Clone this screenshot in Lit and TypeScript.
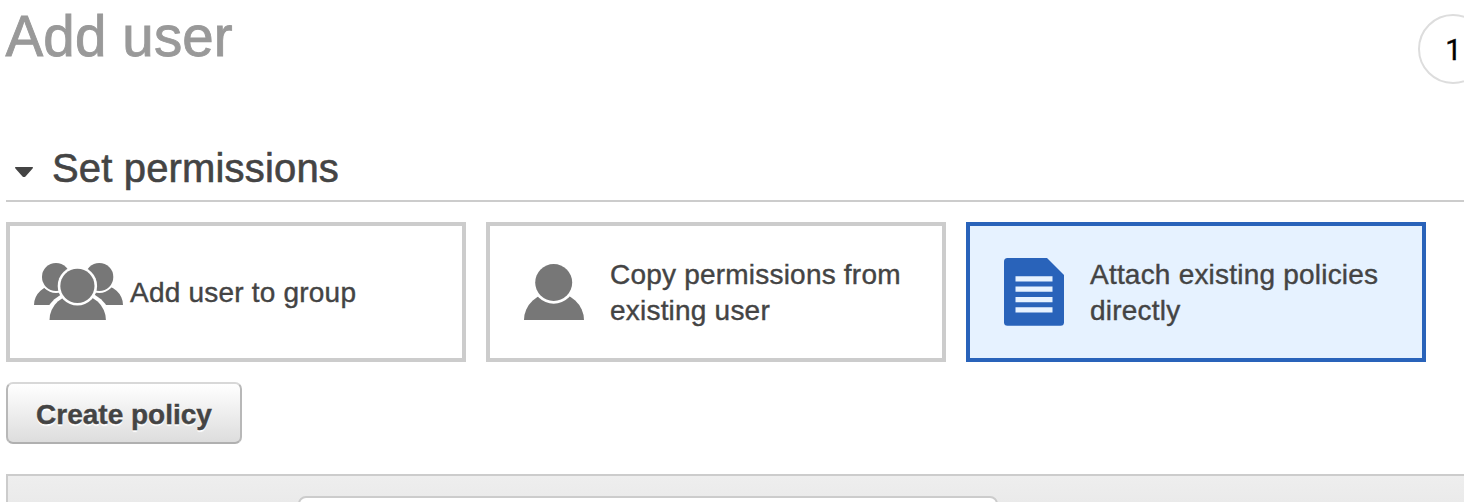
import { LitElement, html, css, svg } from "lit";
import { customElement } from "lit/decorators.js";
import { classMap } from "lit/directives/class-map.js";

const groupIcon = svg`
  <svg width="90" height="60" viewBox="34 262 90 60">
    <g fill="#777">
      <path d="M34 305a22 20 0 0 1 44 0zM79 305a22 20 0 0 1 44 0z"/>
      <circle cx="56" cy="277" r="16" fill="#fff"/>
      <circle cx="99.3" cy="277" r="16" fill="#fff"/>
      <circle cx="56" cy="277" r="14"/>
      <circle cx="99.3" cy="277" r="14"/>
      <path fill="#fff" d="M44.700 320a33 29.500 0 0 1 66 0z"/>
      <path d="M49.500 320a28.200 26 0 0 1 56.400 0z"/>
      <circle cx="77.400" cy="285.900" r="19.700" fill="#fff"/>
      <circle cx="77.400" cy="285.900" r="17.100"/>
    </g>
  </svg>`;

const userIcon = svg`
  <svg width="60" height="58" viewBox="0 0 60 58">
    <path fill="#777" d="M0 57a30 27.500 0 0 1 60 0z"/>
    <circle cx="29.700" cy="19.500" r="21.200" fill="#fff"/>
    <circle cx="29.700" cy="19.500" r="18.500" fill="#777"/>
  </svg>`;

const policyIcon = svg`
  <svg width="60" height="68" viewBox="0 0 60 68">
    <path fill="#2963ba" d="M3.500 0H43L60 17V64.300Q60 67.800 56.500 67.800H3.500Q0 67.800 0 64.300V3.500Q0 0 3.500 0z"/>
    <path fill="#e6f2ff" d="M11.500 18.200H48.500v5.300H11.500zM11.500 28.500H48.500v5.300H11.500zM11.500 39H48.500v5.300H11.500zM11.500 49.300H48.500v5.300H11.500z"/>
  </svg>`;

const options = [
  { kind: "group", icon: groupIcon, lines: ["Add user to group"] },
  { kind: "copy", icon: userIcon, lines: ["Copy permissions from", "existing user"] },
  { kind: "attach", icon: policyIcon, lines: ["Attach existing policies", "directly"] },
];

@customElement("app-root")
export class AppRoot extends LitElement {
  static styles = css`
    :host {
      display: block;
      height: 502px;
      overflow: hidden;
      background: #fff;
      color: #444;
      font-family: "Liberation Sans", Arial, sans-serif;
      font-size: 28px;
      -webkit-text-stroke: 0.4px currentColor;
    }
    * { box-sizing: border-box; }
    svg { display: block; flex: none; }
    .page { padding-left: 6px; }
    header {
      display: flex;
      justify-content: space-between;
      height: 136px;
    }
    h1 {
      margin: 5px 0 0 -0.5px;
      font-size: 56.5px;
      line-height: 64px;
      font-weight: 400;
      letter-spacing: 0.15px;
      color: #999;
      -webkit-text-stroke-width: 0.9px;
    }
    .step {
      flex: none;
      width: 70px;
      height: 70px;
      margin: 14px -24px 0 0;
      padding-left: 1px;
      border: 2px solid #ddd;
      border-radius: 50%;
      font: 29px/69px Roboto, sans-serif;
      color: #000;
      text-align: center;
    }
    .section {
      display: flex;
      align-items: center;
      height: 66px;
      padding-left: 8px;
      border-bottom: 2px solid #ccc;
    }
    .caret { margin: 8px 18px 0 0; }
    h2 {
      margin: 0;
      font-size: 40px;
      line-height: 64px;
      font-weight: 400;
      letter-spacing: 0.16px;
      -webkit-text-stroke-width: 0.6px;
    }
    .options {
      display: flex;
      gap: 20px;
      margin-top: 20px;
    }
    .option {
      display: flex;
      align-items: center;
      width: 460px;
      height: 140px;
      padding-left: 34px;
      border: 4px solid #ccc;
      line-height: 36px;
      white-space: nowrap;
    }
    .label { padding: 2px 0 0 26px; letter-spacing: 0.21px; }
    .group { padding-left: 24px; }
    .group .label { padding-left: 6px; }
    .attach { border-color: #2963ba; background: #e6f2ff; }
    button {
      display: block;
      width: 236px;
      height: 62px;
      margin: 20px 0 30px;
      padding: 3px 0 0;
      border: 2px solid #b8b8b8;
      border-top-color: #d8d8d8;
      border-bottom-color: #b0b0b0;
      border-radius: 7px;
      background: linear-gradient(#fff, #ddd);
      color: #444;
      font: bold 28px/55px "Liberation Sans", Arial, sans-serif;
      text-shadow: 0 2px 1px #fff;
    }
    .panel {
      height: 100px;
      padding: 20px 0 0 290px;
      border: 2px solid #ccc;
      border-right: 0;
      background: linear-gradient(#eee, #e0e0e0);
    }
    .search {
      width: 700px;
      height: 60px;
      border: 2px solid #ccc;
      border-radius: 8px;
      background: #fff;
    }
  `;

  render() {
    return html`
      <div class="page">
        <header>
          <h1>Add user</h1>
          <div class="step">1</div>
        </header>
        <div class="section">
          <svg class="caret" width="20" height="12" viewBox="0 0 20 12">
            <path fill="#444" d="M1.500 1H18.500Q19.500 1.400 18.600 2.400L11.500 10.400Q10 11.600 8.500 10.400L1.400 2.400Q.5 1.400 1.500 1z"/>
          </svg>
          <h2>Set permissions</h2>
        </div>
        <div class="options">
          ${options.map((o) => html`
            <div class=${classMap({ option: true, [o.kind]: true })}>
              ${o.icon}
              <div class="label">${o.lines.map((line) => html`<div>${line}</div>`)}</div>
            </div>`)}
        </div>
        <button>Create policy</button>
        <div class="panel"><div class="search"></div></div>
      </div>
    `;
  }
}
